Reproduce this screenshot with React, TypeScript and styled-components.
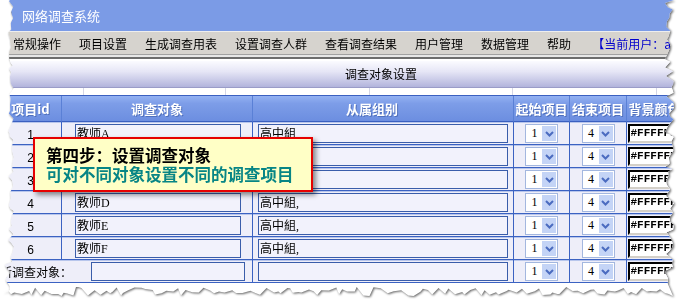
import React from 'react'
import styled, { createGlobalStyle } from 'styled-components'

const CJK = `"Noto Sans CJK SC", "Noto Sans", sans-serif`
const MIXED = `"Liberation Serif", "Noto Sans CJK SC", serif`

const GlobalStyle = createGlobalStyle`
  html, body {
    margin: 0;
    padding: 0;
    background: #fff;
  }
  body {
    width: 684px;
    height: 308px;
    overflow: hidden;
  }
`

const Page = styled.div`
  position: relative;
  width: 684px;
  height: 308px;
  overflow: hidden;
  background: #fff;
`

const Paper = styled.div`
  filter: drop-shadow(1px 1px 1px rgba(0, 0, 0, 0.6));
`

const Screen = styled.div`
  width: 762px;
  height: 302px;
  background: #fff;
  font-family: ${CJK};
  font-size: 12px;
  color: #000;
`

const TitleBar = styled.div`
  display: flex;
  align-items: center;
  gap: 10px;
  height: 31px;
  background: #7b9be6;
  color: #fff;
  font-size: 13px;
`

const MenuBar = styled.div`
  display: flex;
  align-items: center;
  height: 22px;
  padding-left: 4px;
  border-top: 1px solid #eeeeee;
  background: #d6d3ce;
`

const MenuItem = styled.span`
  padding: 0 9px;
  white-space: nowrap;
`

const CurrentUser = styled.span`
  margin-left: 12px;
  color: #0000cc;
  white-space: nowrap;
`

const MenuRule = styled.div`
  height: 2px;
  margin-bottom: 2px;
  border-top: 1px solid #a0a0a0;
  border-bottom: 2px solid #6c6c6c;
  background: #e6e6e6;
`

const SectionBar = styled.div`
  display: flex;
  align-items: center;
  justify-content: center;
  height: 27px;
  padding-bottom: 1px;
  box-sizing: border-box;
  background: linear-gradient(#fbfbff 0%, #e6e6f6 40%, #b2b4dc 100%);
  border-bottom: 1px solid #9a9cc8;
`

const TabStrip = styled.div`
  display: flex;
  height: 7px;
  background: #fff;
`

const TabCell = styled.div<{ $w: number }>`
  width: ${p => p.$w}px;
  flex-shrink: 0;
  border-right: 1px solid #d4d6e6;
`

const Grid = styled.table`
  width: 762px;
  table-layout: fixed;
  border-collapse: separate;
  border-spacing: 0;
  border-top: 1px solid #3b60c0;
`

const HeadCell = styled.th<{ $pr?: number }>`
  height: 25px;
  padding: 0 ${p => p.$pr ?? 0}px 0 0;
  background: linear-gradient(#93b1f2 0%, #7d9de8 30%, #6c8ee0 100%);
  border-right: 1px solid #5a80d6;
  border-bottom: 1px solid #3b60c0;
  color: #fff;
  font-size: 13px;
  font-weight: bold;
  text-shadow: 1px 1px 0 #5070bc;
  white-space: nowrap;
  overflow: hidden;
`

const Cell = styled.td<{ $align?: string }>`
  height: 22px;
  padding: 0;
  background: #eeeef9;
  border-right: 1px solid #3b62c2;
  border-bottom: 1px solid #3b62c2;
  box-shadow: inset 0 1px 0 #b8c6ec;
  text-align: ${p => p.$align ?? 'center'};
  vertical-align: middle;
  white-space: nowrap;
  overflow: hidden;
`

const IdText = styled.span`
  font-family: "Liberation Sans", sans-serif;
  font-size: 12px;
`

const TextBox = styled.input<{ $w: number; $ml?: number }>`
  display: block;
  width: ${p => p.$w}px;
  height: 19px;
  margin-left: ${p => p.$ml ?? 0}px;
  box-sizing: border-box;
  padding: 0 1px;
  border: 1px solid #3a5daa;
  background: #f2f2fc;
  font-family: ${MIXED};
  font-size: 12px;
  color: #000;
  outline: none;
`

const ColorBox = styled.input`
  display: block;
  width: 54px;
  height: 19px;
  margin: 0 auto;
  box-sizing: border-box;
  padding: 0 1px;
  border: 2px solid;
  border-color: #000 #d4d0c8 #d4d0c8 #000;
  background: #fff;
  font-family: "Liberation Mono", monospace;
  font-size: 11px;
  font-weight: bold;
  color: #000;
  outline: none;
`

const SelectBox = styled.div`
  display: inline-flex;
  width: 33px;
  height: 19px;
  box-sizing: border-box;
  padding: 1px;
  border: 1px solid #a3b7df;
  background: #fff;
  vertical-align: middle;
`

const SelectValue = styled.span`
  flex: 1;
  display: flex;
  align-items: center;
  justify-content: center;
  font-family: "Liberation Serif", serif;
  font-size: 12px;
`

const SelectButton = styled.span`
  display: flex;
  align-items: center;
  justify-content: center;
  width: 14px;
  background: #c4d4f6;
`

const NewRowCell = styled(Cell)`
  text-align: left;
`

const NewRowInner = styled.div`
  display: flex;
  align-items: center;
  gap: 19px;
`

const Callout = styled.div`
  position: absolute;
  left: 33px;
  top: 137px;
  width: 280px;
  height: 55px;
  box-sizing: border-box;
  padding: 7px 0 0 11px;
  border: 2px solid #e60000;
  background: #ffffc6;
  box-shadow: 3px 3px 5px rgba(0, 0, 0, 0.45);
  font-family: ${CJK};
  font-size: 16.5px;
  line-height: 19px;
  font-weight: bold;
`

const CalloutLine = styled.div<{ $tone?: 'teal' }>`
  color: ${p => (p.$tone === 'teal' ? '#078585' : '#000')};
  white-space: nowrap;
`

// deterministic jitter for the torn paper outline
const makeRandom = (seed: number) => () => {
  seed = (seed * 16807) % 2147483647
  return seed / 2147483647
}

const tornClip = (() => {
  const rnd = makeRandom(11)
  const pts: string[] = ['10px 0px', '674px 0px']
  for (let y = 3; y < 286; y += 2 + rnd() * 5) pts.push(`${(665 + rnd() * 9).toFixed(1)}px ${y.toFixed(1)}px`)
  for (let x = 673; x > 2; x -= 2 + rnd() * 6) pts.push(`${x.toFixed(1)}px ${(287 + rnd() * 9).toFixed(1)}px`)
  for (let y = 290; y > 0; y -= 2 + rnd() * 5) {
    const base = y > 264 && y < 283 ? 4 : 8
    pts.push(`${(base + rnd() * 6).toFixed(1)}px ${y.toFixed(1)}px`)
  }
  return `polygon(${pts.join(',')})`
})()

const menu = ['常规操作', '项目设置', '生成调查用表', '设置调查人群', '查看调查结果', '用户管理', '数据管理', '帮助']
const tabs = [83, 141, 143, 142, 143, 110]
const targets = ['A', 'B', 'C', 'D', 'E', 'F']

const Chevron = () => (
  <svg width="9" height="6" viewBox="0 0 9 6">
    <path d="M1 1 L4.5 4.5 L8 1" fill="none" stroke="#4b6cc0" strokeWidth="2" />
  </svg>
)

const AppIcon = () => (
  <svg width="12" height="12" viewBox="0 0 12 12">
    <rect x="1" y="2" width="10" height="9" fill="#fff" stroke="#999" />
    <rect x="9" y="5" width="2" height="4" fill="#d02020" />
  </svg>
)

const FakeSelect = ({ value }: { value: string }) => (
  <SelectBox>
    <SelectValue>{value}</SelectValue>
    <SelectButton>
      <Chevron />
    </SelectButton>
  </SelectBox>
)

const App = () => (
  <Page>
    <GlobalStyle />
    <Paper>
      <Screen style={{ clipPath: tornClip }}>
        <TitleBar>
          <AppIcon />
          <span>网络调查系统</span>
        </TitleBar>
        <MenuBar>
          {menu.map(m => (
            <MenuItem key={m}>{m}</MenuItem>
          ))}
          <CurrentUser>【当前用户：admin】</CurrentUser>
        </MenuBar>
        <MenuRule />
        <SectionBar>调查对象设置</SectionBar>
        <TabStrip>
          {tabs.map((w, i) => (
            <TabCell key={i} $w={w} />
          ))}
        </TabStrip>
        <Grid>
          <colgroup>
            <col style={{ width: 62 }} />
            <col style={{ width: 191 }} />
            <col style={{ width: 261 }} />
            <col style={{ width: 56 }} />
            <col style={{ width: 57 }} />
            <col style={{ width: 56 }} />
            <col style={{ width: 79 }} />
          </colgroup>
          <thead>
            <tr>
              <HeadCell>项目id</HeadCell>
              <HeadCell>调查对象</HeadCell>
              <HeadCell $pr={22}>从属组别</HeadCell>
              <HeadCell>起始项目</HeadCell>
              <HeadCell>结束项目</HeadCell>
              <HeadCell>背景颜色</HeadCell>
              <HeadCell>操作</HeadCell>
            </tr>
          </thead>
          <tbody>
            {targets.map((t, i) => (
              <tr key={t}>
                <Cell>
                  <IdText>{i + 1}</IdText>
                </Cell>
                <Cell $align="left">
                  <TextBox $w={166} $ml={13} defaultValue={`教师${t}`} />
                </Cell>
                <Cell $align="left">
                  <TextBox $w={250} $ml={5} defaultValue="高中組," />
                </Cell>
                <Cell>
                  <FakeSelect value="1" />
                </Cell>
                <Cell>
                  <FakeSelect value="4" />
                </Cell>
                <Cell>
                  <ColorBox defaultValue="#FFFFFF" />
                </Cell>
                <Cell />
              </tr>
            ))}
            <tr>
              <NewRowCell colSpan={2}>
                <NewRowInner>
                  <span>新调查对象：</span>
                  <TextBox $w={154} defaultValue="" />
                </NewRowInner>
              </NewRowCell>
              <Cell $align="left">
                <TextBox $w={250} $ml={5} defaultValue="" />
              </Cell>
              <Cell>
                <FakeSelect value="1" />
              </Cell>
              <Cell>
                <FakeSelect value="4" />
              </Cell>
              <Cell>
                <ColorBox defaultValue="#FFFFFF" />
              </Cell>
              <Cell />
            </tr>
          </tbody>
        </Grid>
      </Screen>
    </Paper>
    <Callout>
      <CalloutLine>第四步：设置调查对象</CalloutLine>
      <CalloutLine $tone="teal">可对不同对象设置不同的调查项目</CalloutLine>
    </Callout>
  </Page>
)

export default App
